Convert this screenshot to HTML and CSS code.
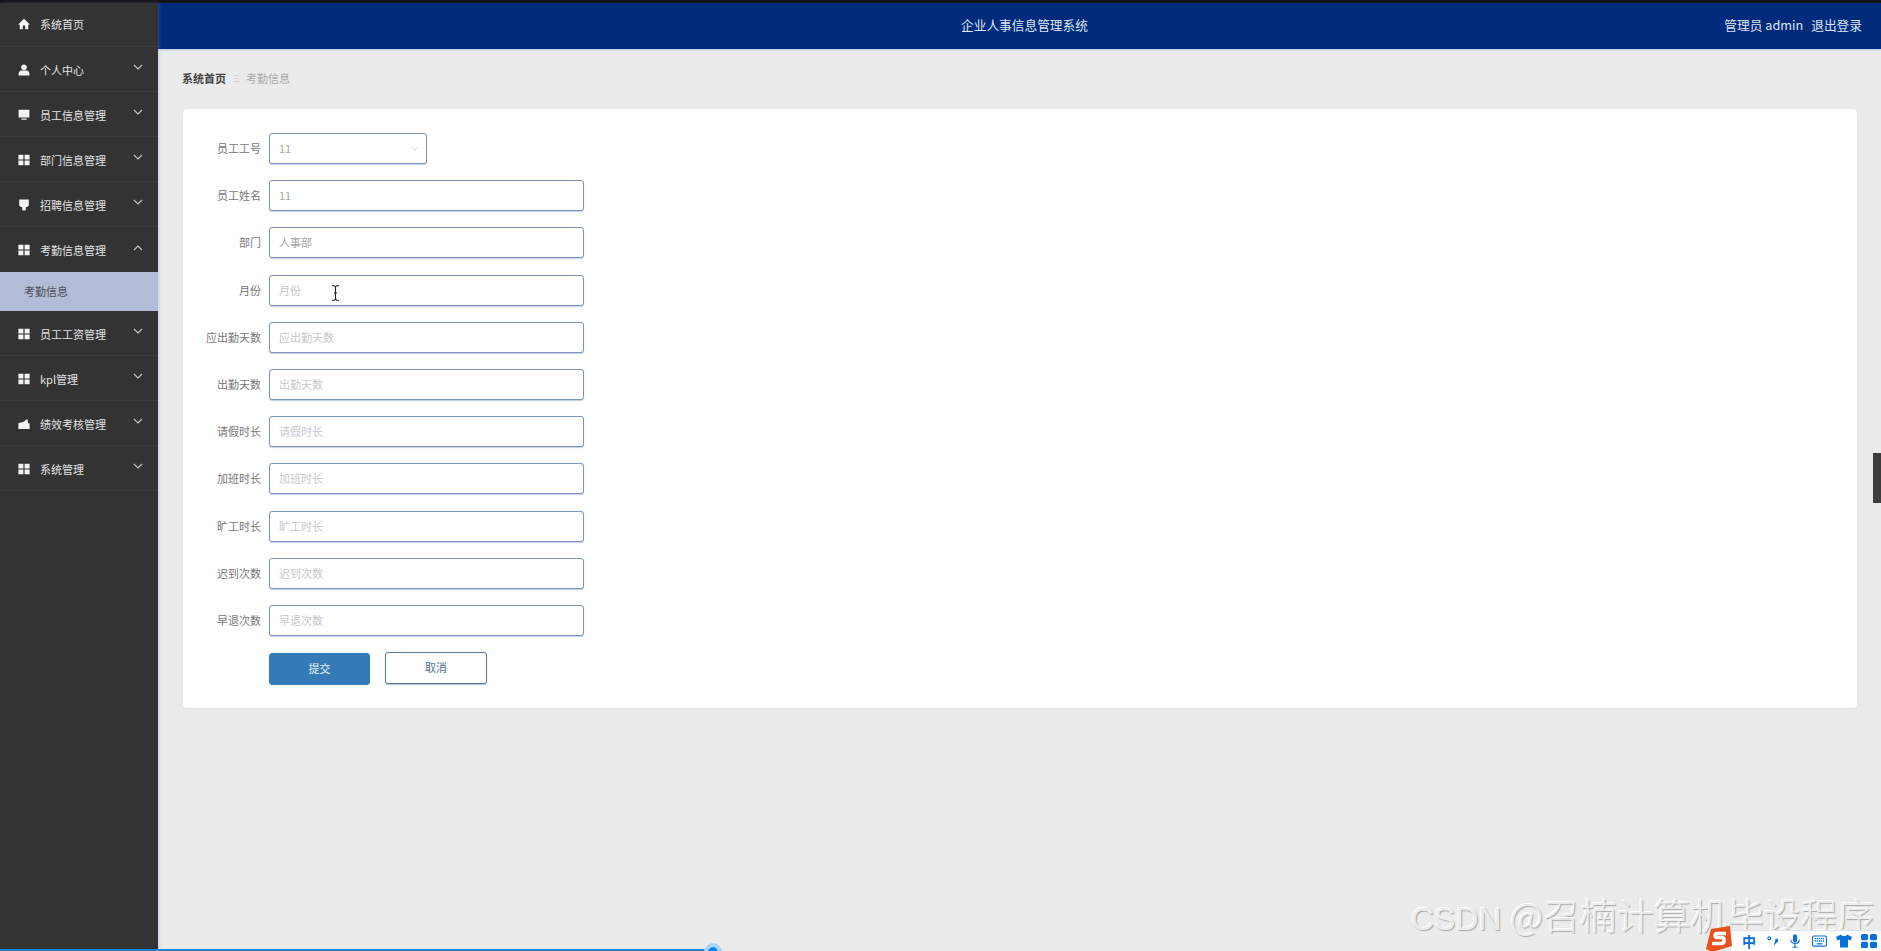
FILE: index.html
```html
<!DOCTYPE html>
<html lang="zh-CN">
<head>
<meta charset="utf-8">
<title>企业人事信息管理系统</title>
<link rel="stylesheet" href="styles.css">
</head>
<body>
<svg class="defs" width="0" height="0" aria-hidden="true">
  <defs>
    <symbol id="i-home" viewBox="0 0 12 12"><path d="M6 .8 .4 6.2l.7.8 .7-.6V11.2h3V7.6h2.4v3.6h3V6.4l.7.6.7-.8z" fill="currentColor"/></symbol>
    <symbol id="i-user" viewBox="0 0 12 12"><circle cx="6" cy="3.2" r="2.8" fill="currentColor"/><path d="M.6 11.4V9.4c0-1.800 1.600-3 3-3h4.800c1.400 0 3 1.200 3 3v2z" fill="currentColor"/></symbol>
    <symbol id="i-screen" viewBox="0 0 12 12"><path d="M.6.8h10.800v7.600H.6zM3.400 9.600h5.200v1.200H3.400z" fill="currentColor"/></symbol>
    <symbol id="i-grid" viewBox="0 0 12 12"><path d="M.4.8h5v4.600h-5zM6.600.8h5v4.600h-5zM.4 6.600h5v4.600h-5zM6.600 6.600h5v4.600h-5z" fill="currentColor"/></symbol>
    <symbol id="i-pin" viewBox="0 0 12 12"><path d="M1.200.4h9.600v6L9.300 8H8l-.5 3.400h-3L4 8H2.700L1.200 6.400z" fill="currentColor"/></symbol>
    <symbol id="i-wallet" viewBox="0 0 12 12"><path d="M.4 5.200 6.200 3.600 8.200 1.400 9.600 1.400 10 5.200h1.600v5.800H.4z" fill="currentColor"/></symbol>
    <symbol id="i-chev" viewBox="0 0 10 6"><path d="M1 1l4 4 4-4" fill="none" stroke="currentColor" stroke-width="1.100"/></symbol>
  </defs>
</svg>

<div class="topline"></div>
<div class="app">
  <aside class="sidebar">
    <ul class="menu">
      <li class="menu-row first"><svg class="ic"><use href="#i-home"/></svg><span>系统首页</span></li>
      <li class="menu-row"><svg class="ic"><use href="#i-user"/></svg><span>个人中心</span><svg class="chev"><use href="#i-chev"/></svg></li>
      <li class="menu-row"><svg class="ic"><use href="#i-screen"/></svg><span>员工信息管理</span><svg class="chev"><use href="#i-chev"/></svg></li>
      <li class="menu-row"><svg class="ic"><use href="#i-grid"/></svg><span>部门信息管理</span><svg class="chev"><use href="#i-chev"/></svg></li>
      <li class="menu-row"><svg class="ic"><use href="#i-pin"/></svg><span>招聘信息管理</span><svg class="chev"><use href="#i-chev"/></svg></li>
      <li class="menu-row open"><svg class="ic"><use href="#i-grid"/></svg><span>考勤信息管理</span><svg class="chev up"><use href="#i-chev"/></svg></li>
      <li class="menu-sub">考勤信息</li>
      <li class="menu-row"><svg class="ic"><use href="#i-grid"/></svg><span>员工工资管理</span><svg class="chev"><use href="#i-chev"/></svg></li>
      <li class="menu-row"><svg class="ic"><use href="#i-grid"/></svg><span>kpl管理</span><svg class="chev"><use href="#i-chev"/></svg></li>
      <li class="menu-row"><svg class="ic"><use href="#i-wallet"/></svg><span>绩效考核管理</span><svg class="chev"><use href="#i-chev"/></svg></li>
      <li class="menu-row"><svg class="ic"><use href="#i-grid"/></svg><span>系统管理</span><svg class="chev"><use href="#i-chev"/></svg></li>
    </ul>
  </aside>

  <div class="content">
    <header class="header">
      <span></span>
      <div class="title">企业人事信息管理系统</div>
      <div class="user"><span>管理员 admin</span><span>退出登录</span></div>
    </header>
    <main class="main">
      <nav class="crumbs"><b>系统首页</b><i>三</i><span>考勤信息</span></nav>
      <section class="card">
        <form class="form">
          <div class="row"><label>员工工号</label><div class="select"><span>11</span><svg class="select-arrow"><use href="#i-chev"/></svg></div></div>
          <div class="row"><label>员工姓名</label><input class="field filled" value="11"></div>
          <div class="row"><label>部门</label><input class="field filled" value="人事部"></div>
          <div class="row"><label>月份</label><input class="field" placeholder="月份"></div>
          <div class="row"><label>应出勤天数</label><input class="field" placeholder="应出勤天数"></div>
          <div class="row"><label>出勤天数</label><input class="field" placeholder="出勤天数"></div>
          <div class="row"><label>请假时长</label><input class="field" placeholder="请假时长"></div>
          <div class="row"><label>加班时长</label><input class="field" placeholder="加班时长"></div>
          <div class="row"><label>旷工时长</label><input class="field" placeholder="旷工时长"></div>
          <div class="row"><label>迟到次数</label><input class="field" placeholder="迟到次数"></div>
          <div class="row"><label>早退次数</label><input class="field" placeholder="早退次数"></div>
          <div class="actions">
            <button type="button" class="btn primary">提交</button>
            <button type="button" class="btn ghost">取消</button>
          </div>
        </form>
      </section>
    </main>
  </div>
</div>

<svg class="cursor" viewBox="0 0 9 16"><path d="M1 .8h2.200l1.300.9 1.300-.9H8M4.500 1.700v12.600M1 15.200h2.200l1.300-.9 1.300.9H8M3 8h3" fill="none" stroke="#222" stroke-width="1.100"/></svg>
<div class="handle"></div>
<div class="watermark"><span class="wm-latin">CSDN</span> @召楠计算机毕设程序</div>
<div class="progress"><div class="progress-fill"></div><div class="progress-dot"></div></div>
<div class="ime">
  <svg class="ime-logo" viewBox="0 0 26 26"><path d="M5 3 24 0l2 20-20 6-6-3z" fill="#e8501f"/><path d="M20 7.500H11c-2.500 0-2.500 4 0 4h5c3 0 3 6-1 6H6" fill="none" stroke="#fff" stroke-width="3.600"/></svg>
  <span class="ime-zh">中</span>
  <svg class="ime-ic" viewBox="0 0 12 12"><circle cx="2.500" cy="3" r="1.600" fill="none" stroke="currentColor" stroke-width="1.200"/><path d="M9 5.500a1.600 1.600 0 1 1 .9 1.500C9.800 8.500 9 9.500 7.800 10" fill="currentColor" stroke="currentColor"/></svg>
  <svg class="ime-ic mic" viewBox="0 0 12 16"><rect x="3.500" y="0" width="5" height="10" rx="2.500" fill="currentColor"/><path d="M1 6.500c0 6 10 6 10 0M6 12v3M3 15.500h6" fill="none" stroke="currentColor" stroke-width="1.400"/></svg>
  <svg class="ime-ic kb" viewBox="0 0 16 12"><rect x=".6" y=".6" width="14.800" height="10.800" rx="1.500" fill="none" stroke="currentColor" stroke-width="1.200"/><path d="M3 3.500h10M3 6h10" stroke="currentColor" stroke-width="1.400" stroke-dasharray="1.400 .7"/><path d="M5 9h6" stroke="currentColor" stroke-width="1.400"/></svg>
  <svg class="ime-ic wide" viewBox="0 0 16 13"><path d="M5 0 0 2.500 1.500 6 4 5v8h8V5l2.500 1L16 2.500 11 0c-.5 2-5.500 2-6 0z" fill="currentColor"/></svg>
  <svg class="ime-ic wide" viewBox="0 0 16 14"><rect x="0" y="0" width="7" height="6.300" rx="1.500" fill="currentColor"/><rect x="9" y="0" width="7" height="6.300" rx="1.500" fill="currentColor"/><rect x="0" y="7.700" width="7" height="6.300" rx="1.500" fill="currentColor"/><rect x="9" y="7.700" width="7" height="6.300" rx="1.500" fill="currentColor"/></svg>
</div>
</body>
</html>
```

FILE: styles.css
```css
* { box-sizing: border-box; }
html, body { height: 100%; }
body {
  margin: 0;
  background: #ebebeb;
  font-family: "Noto Sans CJK SC", "Liberation Sans", sans-serif;
  font-size: 11px;
  overflow: hidden;
  display: flex;
  flex-direction: column;
}
.defs { position: absolute; }
.topline { height: 3px; flex: none; background: #141414; }
.app { flex: 1; display: flex; min-height: 0; }

.sidebar { width: 158px; flex: none; background: #333; box-shadow: 1px 0 3px rgba(120,150,210,.35); z-index: 1; }
.menu { list-style: none; margin: 0; padding: 0; }
.menu-row {
  height: 45px;
  display: flex;
  align-items: center;
  padding: 1px 17px 0 18px;
  color: #e2e2e2;
  font-size: 11px;
  border-bottom: 1px solid #3b3b3b;
}
.menu-row.first { height: 44px; padding-top: 0; padding-bottom: 1px; }
.menu-row.open { border-bottom: 0; }
.menu-row span { flex: 1; margin-left: 10px; }
.ic { width: 12px; height: 12px; color: #f4f4f4; flex: none; }
.chev { width: 10px; height: 6px; color: #c8c8c8; flex: none; margin: -5px -2px 0 0; }
.chev.up { transform: rotate(180deg); }
.menu-sub {
  height: 39px;
  line-height: 38px;
  padding-left: 24px;
  background: #b3bcd6;
  color: #4d4f58;
  font-size: 11px;
}

.content { flex: 1; min-width: 0; display: flex; flex-direction: column; }
.header {
  height: 46px;
  flex: none;
  display: grid;
  grid-template-columns: 1fr auto 1fr;
  align-items: center;
  padding: 0 19px 3px 29px;
  background: #002b7c;
  color: #dfe6f3;
  font-size: 12.7px;
  box-shadow: 0 1px 2px rgba(130,160,210,.5);
}
.user { display: flex; gap: 8px; justify-content: flex-end; }

.main { flex: 1; padding: 0 24px 0 25px; }
.crumbs { height: 60px; display: flex; align-items: center; padding-bottom: 2px; color: #a8a8a8; font-size: 11px; }
.crumbs b { color: #444; margin-left: -1px; }
.crumbs i { font-style: normal; font-size: 7px; color: #c4c4c4; margin: 0 6px 0 7px; }
.card { height: 599px; background: #fff; border-radius: 4px; box-shadow: 0 0 3px rgba(0,0,0,.06); padding: 24px 0 0 0; }
.form { display: flex; flex-direction: column; gap: 15.2px; }
.row { display: flex; align-items: flex-start; gap: 8px; height: 32px; }
.row label { width: 78px; line-height: 31px; text-align: right; color: #777; font-size: 11px; flex: none; }
.field, .select {
  height: 31px;
  border: 1px solid #7e93bb;
  border-radius: 3px;
  background: #fff;
  box-shadow: 0 1px 1px rgba(150,165,200,.55);
  padding: 0 9px 1px;
  font: inherit;
  font-size: 11px;
  color: #a6a6a6;
  outline: 0;
}
.field { width: 315px; }
.field::placeholder { color: #c6c8d0; opacity: 1; }
.select { width: 158px; display: flex; align-items: center; justify-content: space-between; }
.select-arrow { width: 9px; height: 5px; color: #c8c8c8; margin-right: -2px; }
.actions { display: flex; align-items: flex-start; gap: 15px; padding-left: 86px; margin-top: .8px; }
.btn { width: 101px; height: 32px; padding: 0 0 2px; border-radius: 3px; font: inherit; font-size: 11px; }
.primary { background: #337ab7; border: 1px solid #337ab7; color: #eef4fa; }
.ghost { width: 102px; margin-top: -1px; background: #fff; border: 1px solid #55789c; color: #50708f; box-shadow: 0 1px 1px rgba(100,130,160,.5); }

.cursor { position: absolute; left: 331px; top: 285px; width: 9px; height: 16px; }
.handle { position: absolute; right: 0; top: 453px; width: 8px; height: 50px; background: #3d3d3d; }
.watermark {
  position: absolute;
  left: 1411px;
  top: 889px;
  font-family: "Noto Sans CJK SC", "Liberation Sans", sans-serif;
  font-weight: 300;
  font-size: 36.8px;
  line-height: 50px;
  white-space: nowrap;
  color: #ececec;
  text-shadow: 1px 1px 1px #a8a8a8, -1px -1px 0 #fff;
  z-index: 3;
}
.wm-latin { font-family: "Liberation Sans", sans-serif; font-size: 32px; }
.progress { position: absolute; left: 0; right: 0; bottom: 0; height: 2px; z-index: 2; }
.progress-fill { width: 712px; height: 2px; background: #1486e6; }
.progress-dot {
  position: absolute;
  left: 704px;
  top: -6px;
  width: 18px;
  height: 18px;
  border-radius: 50%;
  background: #0a84f5;
  border: 4px solid #a9d3f7;
  background-clip: padding-box;
}
.ime {
  position: absolute;
  right: 0;
  bottom: 0;
  width: 151px;
  height: 21px;
  background: #fff;
  border: 1px solid #dde6f0;
  border-width: 1px 0 0 1px;
  display: flex;
  align-items: center;
  padding-left: 11px;
  gap: 11px;
  color: #0b6fd8;
  z-index: 4;
}
.ime-logo { position: absolute; left: -25px; top: -5px; width: 26px; height: 26px; }
.ime-zh { font-size: 14px; font-weight: 700; line-height: 1; width: 14px; }
.ime-ic { width: 11px; height: 16px; flex: none; }
.ime-ic.mic { width: 10px; margin-left: 1px; }
.ime-ic.kb { width: 15px; height: 12px; margin-left: 1px; }
.ime-ic.wide { width: 16px; height: 14px; margin-left: -2px; }
```
